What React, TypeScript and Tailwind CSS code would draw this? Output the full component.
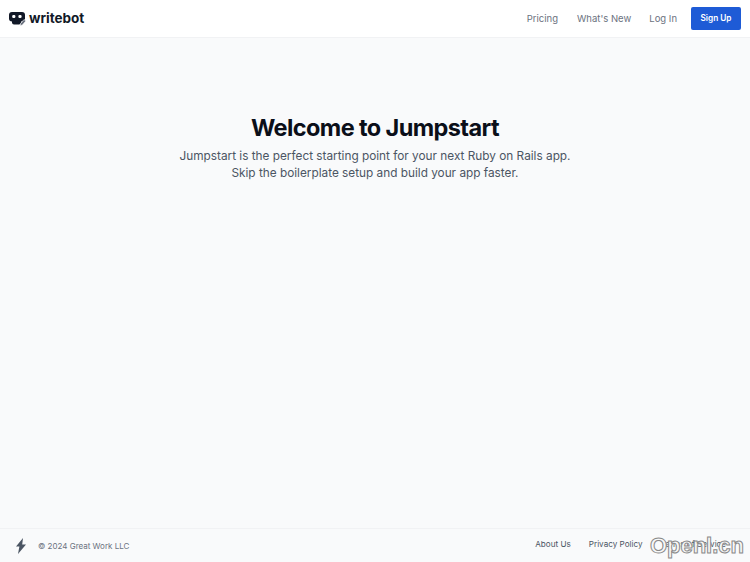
export default function App() {
  return (
    <div className="relative flex h-[562px] flex-col overflow-hidden bg-[#f9fafb] font-['Inter',sans-serif]">
      <header className="flex h-[38px] items-center justify-between border-b border-[#f1f2f4] bg-white pl-[9px] pr-[9px]">
        <Logo />
        <nav className="flex items-center pt-[1px] text-[9.5px] text-[#6b7280]">
          <a className="mr-[19px]">Pricing</a>
          <a className="mr-[18px]">What's New</a>
          <a className="mr-[14px]">Log In</a>
          <a className="-mt-[1px] flex h-[23px] w-[50px] items-center justify-center rounded-[2px] bg-[#1e5bd6] text-[8.25px] font-semibold text-white">
            Sign Up
          </a>
        </nav>
      </header>

      <main className="flex flex-1 flex-col items-center pt-[74px] text-center">
        <h1 className="text-[23.5px] font-bold leading-[32px] tracking-[-0.6px] text-[#0b0f19]">
          Welcome to Jumpstart
        </h1>
        <p className="mt-[4px] text-[11.8px] leading-[17px] text-[#4b5563]">
          Jumpstart is the perfect starting point for your next Ruby on Rails app.
          <br />
          Skip the boilerplate setup and build your app faster.
        </p>
      </main>

      <footer className="flex h-[34px] items-center justify-between border-t border-[#f1f2f4] pl-[15px] pr-[24px]">
        <div className="flex items-center">
          <svg viewBox="0 0 12 16" className="h-[16px] w-[12px] fill-[#4b5563]" aria-hidden>
            <path d="M8 0 1 8.5h3.4L3 16l8-9.5H7.2z" />
          </svg>
          <span className="ml-[11px] text-[8px] text-[#6b7280]">© 2024 Great Work LLC</span>
        </div>
        <div className="-mt-[2px] flex items-center gap-[18px] text-[8.15px] text-[#4b5563]">
          <a>About Us</a>
          <a>Privacy Policy</a>
          <a>Terms of Service</a>
        </div>
      </footer>

      {/* Watermark stamped over the footer */}
      <span className="absolute bottom-[2px] right-[6px] font-['Liberation_Sans',sans-serif] text-[22px] leading-[28px] font-bold text-[#f8f8f8] [-webkit-text-stroke:1px_#8a8a8a]">
        Openl.cn
      </span>
    </div>
  );
}

function Logo() {
  return (
    <div className="flex items-center">
      <svg viewBox="0 0 17 14" className="mt-[1px] h-[14px] w-[17px]" aria-hidden>
        <rect x="0" y="0" width="16" height="9.5" rx="3" fill="#111827" />
        <path d="M3 8h9v2.5a2 2 0 0 1-2 2H5a2 2 0 0 1-2-2z" fill="#111827" />
        <rect x="3.2" y="3" width="3.2" height="3" rx="1.2" fill="#fff" />
        <rect x="9.4" y="3" width="3.2" height="3" rx="1.2" fill="#fff" />
        <path d="M11.5 11.5 15 7.5l1.8 1.6-3.5 4-2.2.6z" fill="#6b7280" stroke="#fff" strokeWidth="0.6" />
      </svg>
      <span className="ml-[3px] text-[13.5px] font-bold text-[#111827]">writebot</span>
    </div>
  );
}
